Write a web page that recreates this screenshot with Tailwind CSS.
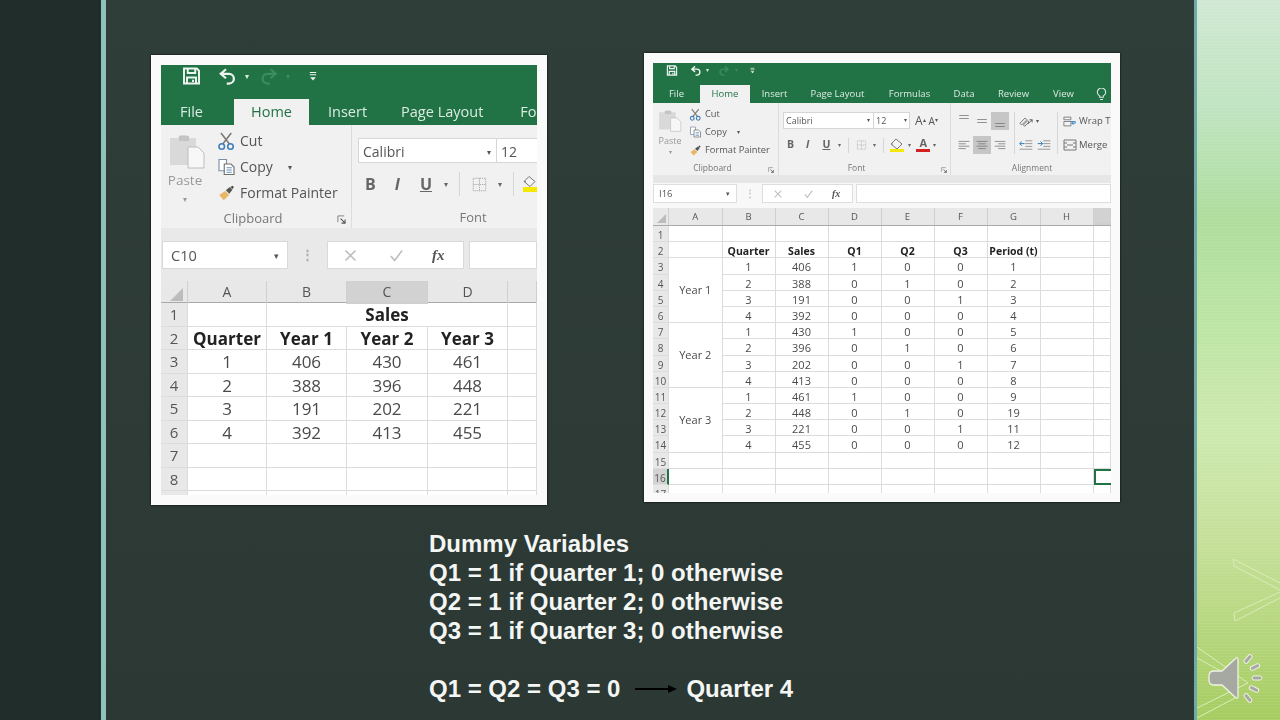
<!DOCTYPE html>
<html lang="en">
<head>
    <meta charset="UTF-8">
    <title>Dummy Variables</title>
    <script src="https://cdn.jsdelivr.net/npm/@tailwindcss/browser@4"></script>
</head>
<body class="w-[1280px] h-[720px] overflow-hidden bg-[#212d2a] font-['Open_Sans',sans-serif]">

    <!-- shared ribbon icons -->
    <svg class="hidden">
        <symbol id="save" viewBox="0 0 24 24"><path d="M2 2h17l3 3v17H2z M7 2v6h10V2 M6 22v-8h12v8 M14 17v3" fill="none" stroke="currentColor" stroke-width="2.600"/></symbol>
        <symbol id="undo" viewBox="0 0 24 24"><path d="M10 3 3 9l7 6 M3 9h11a6.500 6.500 0 0 1 0 13h-3" fill="none" stroke="currentColor" stroke-width="3"/></symbol>
        <symbol id="redo" viewBox="0 0 24 24"><path d="M14 3l7 6-7 6 M21 9H10a6.500 6.500 0 0 0 0 13h3" fill="none" stroke="currentColor" stroke-width="3"/></symbol>
        <symbol id="qat" viewBox="0 0 10 12"><path d="M1 1.500h8M1 4.500h8" stroke="currentColor" stroke-width="1.300"/><path d="M1.500 7.500h7L5 11.500z" fill="currentColor"/></symbol>
        <symbol id="paste" viewBox="0 0 36 36"><path d="M1 5h8l2-3h7l2 3h7v27H1z" fill="#d9d9d9"/><path d="M10 3h10v5H10z" fill="#c4c4c4"/><path d="M19 14h10l6 6v15H19z" fill="#f7f7f7" stroke="#bdbdbd"/></symbol>
        <symbol id="cut" viewBox="0 0 24 24"><path d="M5 2l11 14M18 2 7 16" fill="none" stroke="#7a7a7a" stroke-width="2"/><circle cx="6" cy="19" r="3.500" fill="none" stroke="#3f7fb8" stroke-width="2"/><circle cx="17" cy="19" r="3.500" fill="none" stroke="#3f7fb8" stroke-width="2"/></symbol>
        <symbol id="copy" viewBox="0 0 24 24"><path d="M2 2h10v15H2z" fill="#fff" stroke="#7d8fa3" stroke-width="1.500"/><path d="M9 8h9l4 4v10H9z" fill="#fff" stroke="#6f6f6f" stroke-width="1.500"/><path d="M12 13h7M12 16h7M12 19h7" stroke="#5a8fc0" stroke-width="1.300"/></symbol>
        <symbol id="painter" viewBox="0 0 24 24"><path d="M1 15l9-6 6 6-8 8z" fill="#e8b765"/><path d="M11 8l6-5 4 4-5 6z" fill="#555"/><path d="M18 3l3-2 2 2-2 3z" fill="#444"/></symbol>
        <symbol id="border" viewBox="0 0 24 24"><path d="M2 2h20v20H2z M12 2v20 M2 12h20" fill="none" stroke="#a5a5a5" stroke-width="1.500" stroke-dasharray="2 1.500"/></symbol>
        <symbol id="launch" viewBox="0 0 10 10"><path d="M1 8V1h7" fill="none" stroke="#777" stroke-width="1"/><path d="M4 4l5 5M9 5v4H5" fill="none" stroke="#555" stroke-width="1.200"/></symbol>
        <symbol id="cross" viewBox="0 0 24 24"><path d="M4 4l16 16M20 4 4 20" stroke="#bdbdbd" stroke-width="2.500"/></symbol>
        <symbol id="check" viewBox="0 0 24 24"><path d="M3 13l6 7L21 4" fill="none" stroke="#bdbdbd" stroke-width="2.500"/></symbol>
        <symbol id="lines-l" viewBox="0 0 20 16"><path d="M1 2h18M1 6h12M1 10h18M1 14h12" stroke="#777" stroke-width="1.300"/></symbol>
        <symbol id="lines-c" viewBox="0 0 20 16"><path d="M1 2h18M4 6h12M1 10h18M4 14h12" stroke="#777" stroke-width="1.300"/></symbol>
        <symbol id="lines-r" viewBox="0 0 20 16"><path d="M1 2h18M7 6h12M1 10h18M7 14h12" stroke="#777" stroke-width="1.300"/></symbol>
        <symbol id="lines-m" viewBox="0 0 20 8"><path d="M2 1.500h16M2 6.500h16" stroke="#777" stroke-width="1.300"/></symbol>
        <symbol id="outdent" viewBox="0 0 20 14"><path d="M9 1h10M9 5h10M9 9h10M1 13h18" stroke="#888" stroke-width="1.200"/><path d="M8 5H1M4 2 1 5l3 3" fill="none" stroke="#2f7fc0" stroke-width="1.400"/></symbol>
        <symbol id="indent" viewBox="0 0 20 14"><path d="M9 1h10M9 5h10M9 9h10M1 13h18" stroke="#888" stroke-width="1.200"/><path d="M1 5h7M5 2l3 3-3 3" fill="none" stroke="#2f7fc0" stroke-width="1.400"/></symbol>
        <symbol id="orient" viewBox="0 0 16 12"><path d="M1 8l6-6 2 2-6 6zM5 10l5-5 1.500 1.500-5 5z" fill="none" stroke="#666" stroke-width="1"/><path d="M10 9l5-5M15 4h-3M15 4v3" fill="none" stroke="#555" stroke-width="1"/></symbol>
        <symbol id="wrap" viewBox="0 0 16 12"><path d="M1 1h8v3H1zM1 6h8v5H1z" fill="#f4f4f4" stroke="#777" stroke-width="1"/><path d="M9 6h5v2h-4M12 6.500l-2 1.500 2 1.500" fill="none" stroke="#2f7fc0" stroke-width="1"/></symbol>
        <symbol id="merge" viewBox="0 0 14 12"><path d="M1 1h12v10H1zM1 4h3M10 4h3M1 8h3M10 8h3M4 6h6" fill="none" stroke="#777" stroke-width="1"/></symbol>
        <symbol id="bucket" viewBox="0 0 14 10"><path d="M6 0l6 5-5 5-6-5z" fill="#f4f4f4" stroke="#777" stroke-width="1"/><path d="M1 5h2" stroke="#888"/></symbol>
    </svg>

    <div class="flex h-full">
        <div class="w-[101px] shrink-0"></div>
        <div class="w-[5px] shrink-0 bg-[#8ec3bc]"></div>

        <!-- slide body -->
        <main class="w-[1088px] shrink-0 bg-gradient-to-b from-[#303e3a] to-[#2b3834] pt-[53px]">
            <div class="flex items-start">

                <!-- left screenshot -->
                <section class="ml-[45px] mt-[2px] w-[396px] h-[450px] bg-[#fafafa] p-[10px] shadow-[0_0_2px_#000]">
                    <div class="w-[376px] h-[430px] overflow-hidden blur-[0.5px] bg-white text-[#555]">
                        <div class="h-[60px] bg-[#217346] text-[#dcebe2]">
                            <div class="h-[34px] flex items-center pl-[21px] pb-[12px]">
                                <svg class="w-[19px] h-[18px] text-[#eef5f0]"><use href="#save"/></svg>
                                <svg class="w-[19px] h-[18px] ml-[17px] text-[#eef5f0]"><use href="#undo"/></svg>
                                <span class="ml-[8px] text-[8px]">▾</span>
                                <svg class="w-[18px] h-[18px] ml-[11px] text-[#3f8a60]"><use href="#redo"/></svg>
                                <span class="ml-[8px] text-[8px] text-[#3f8a60]">▾</span>
                                <svg class="ml-[19px] w-[8px] h-[10px] text-[#eef5f0]"><use href="#qat"/></svg>
                            </div>
                            <div class="h-[26px] flex whitespace-nowrap text-[14.500px] leading-[26px] *:shrink-0">
                                <div class="w-[73px] pl-[19px]">File</div>
                                <div class="w-[75px] text-center bg-[#f1f1f1] text-[#217346]">Home</div>
                                <div class="ml-[19px]">Insert</div>
                                <div class="ml-[34px]">Page Layout</div>
                                <div class="ml-[37px]">Fo</div>
                            </div>
                        </div>

                        <div class="h-[103px] flex bg-[#f1f1f1]">
                            <div class="relative w-[191px] shrink-0 flex flex-col border-r border-[#dcdcdc]">
                                <div class="h-[84px] flex">
                                    <div class="w-[50px] pl-[8px] pt-[8px] text-center text-[13.500px] text-[#999] leading-[16px]">
                                        <svg class="w-[36px] h-[36px]"><use href="#paste"/></svg>
                                        <div class="-ml-[5px] mt-[3px] w-[42px]">Paste</div>
                                        <div class="-ml-[5px] mt-[3px] w-[42px] text-[8px]">▾</div>
                                    </div>
                                    <div class="ml-[6px] pt-[3px] text-[14px] leading-[26px]">
                                        <div class="flex items-center gap-[4px]"><svg class="w-[19px] h-[20px]"><use href="#cut"/></svg>Cut</div>
                                        <div class="flex items-center gap-[4px]"><svg class="w-[19px] h-[18px]"><use href="#copy"/></svg>Copy<span class="ml-[11px] text-[8px]">▾</span></div>
                                        <div class="flex items-center gap-[4px]"><svg class="w-[19px] h-[16px]"><use href="#painter"/></svg>Format Painter</div>
                                    </div>
                                </div>
                                <div class="text-center text-[13px] leading-[18px] text-[#777] pr-[6px]">Clipboard</div>
                                <svg class="absolute right-[5px] bottom-[4px] w-[9px] h-[9px]"><use href="#launch"/></svg>
                            </div>
                            <div class="w-[242px] shrink-0 flex flex-col pl-[6px] pt-[13px]">
                                <div class="h-[25px] flex text-[14px] leading-[25px]">
                                    <div class="w-[139px] flex justify-between px-[4px] bg-white border border-[#d6d6d6]">Calibri<span class="text-[8px] pr-[1px]">▾</span></div>
                                    <div class="w-[60px] pl-[4px] bg-white border border-[#d6d6d6] border-l-0">12</div>
                                </div>
                                <div class="h-[26px] mt-[8px] flex items-center text-[16px] text-[#666]">
                                    <span class="ml-[7px] font-bold">B</span>
                                    <span class="ml-[19px] italic font-bold">I</span>
                                    <span class="ml-[20px] font-bold underline">U</span>
                                    <span class="ml-[12px] text-[8px]">▾</span>
                                    <div class="ml-[11px] w-px h-[24px] bg-[#d6d6d6]"></div>
                                    <svg class="ml-[11px] w-[17px] h-[15px]"><use href="#border"/></svg>
                                    <span class="ml-[10px] text-[8px]">▾</span>
                                    <div class="ml-[11px] w-px h-[24px] bg-[#d6d6d6]"></div>
                                    <div class="ml-[9px] w-[14px] shrink-0 border-b-[5px] border-[#f4e900]"><svg class="block w-[14px] h-[11px]"><use href="#bucket"/></svg></div>
                                </div>
                                <div class="mt-[11px] text-center text-[13px] leading-[18px] text-[#777] pr-[6px]">Font</div>
                            </div>
                        </div>

                        <div class="h-[53px] bg-[#e9e9e9] pt-[13px] pl-[1px] flex">
                            <div class="w-[126px] h-[28px] flex justify-between px-[8px] bg-white border border-[#d9d9d9] text-[14.500px] leading-[27px]">C10<span class="text-[9px]">▾</span></div>
                            <div class="w-[39px] text-center text-[#aaa] text-[13px] leading-[26px] font-bold">⋮</div>
                            <div class="w-[137px] h-[28px] flex items-center bg-white border border-[#d9d9d9] pl-[15px]">
                                <svg class="w-[15px] h-[15px]"><use href="#cross"/></svg>
                                <svg class="ml-[30px] w-[17px] h-[15px]"><use href="#check"/></svg>
                                <span class="ml-[27px] font-['Liberation_Serif',serif] italic font-bold text-[15px]">fx</span>
                            </div>
                            <div class="ml-[5px] flex-1 h-[28px] bg-white border border-[#d9d9d9]"></div>
                        </div>

                        <div class="grid grid-cols-[27px_79px_80px_81px_80px_29px] h-[22px] bg-[#e8e8e8] text-[14px] leading-[21px] text-center border-b border-[#a9a9a9] *:border-r *:border-[#cfcfcf]">
                            <div class="relative"><div class="absolute right-[4px] bottom-[3px] w-0 h-0 border-l-[13px] border-b-[13px] border-l-transparent border-b-[#bcbcbc]"></div></div>
                            <div>A</div><div>B</div>
                            <div class="bg-[#d2d2d2] border-b-2 border-b-[#217346]">C</div>
                            <div>D</div><div class="border-r-0"></div>
                        </div>
                        <div class="grid grid-cols-[27px_79px_80px_81px_80px_29px] auto-rows-[23.500px] text-[17px] leading-[23px] text-center text-[#4a4a4a] *:border-b *:border-r *:border-[#dcdcdc]">
                            <div class="bg-[#e8e8e8] text-[15px] text-[#555]">1</div><div></div><div class="col-span-3 font-bold text-[#222]">Sales</div><div></div>
                            <div class="bg-[#e8e8e8] text-[15px] text-[#555]">2</div><div class="font-bold text-[#222]">Quarter</div><div class="font-bold text-[#222]">Year 1</div><div class="font-bold text-[#222]">Year 2</div><div class="font-bold text-[#222]">Year 3</div><div></div>
                            <div class="bg-[#e8e8e8] text-[15px] text-[#555]">3</div><div>1</div><div>406</div><div>430</div><div>461</div><div></div>
                            <div class="bg-[#e8e8e8] text-[15px] text-[#555]">4</div><div>2</div><div>388</div><div>396</div><div>448</div><div></div>
                            <div class="bg-[#e8e8e8] text-[15px] text-[#555]">5</div><div>3</div><div>191</div><div>202</div><div>221</div><div></div>
                            <div class="bg-[#e8e8e8] text-[15px] text-[#555]">6</div><div>4</div><div>392</div><div>413</div><div>455</div><div></div>
                            <div class="bg-[#e8e8e8] text-[15px] text-[#555]">7</div><div></div><div></div><div></div><div></div><div></div>
                            <div class="bg-[#e8e8e8] text-[15px] text-[#555]">8</div><div></div><div></div><div></div><div></div><div></div>
                            <div class="bg-[#e8e8e8]"></div><div></div><div></div><div></div><div></div><div></div>
                        </div>
                    </div>
                </section>

                <!-- right screenshot -->
                <section class="ml-[97px] w-[476px] h-[449px] bg-[#fafafa] pl-[9px] pt-[10px] shadow-[0_0_2px_#000]">
                    <div class="w-[458px] h-[430px] overflow-hidden blur-[0.5px] bg-white text-[#555]">
                        <div class="h-[40px] bg-[#217346] text-[#dcebe2]">
                            <div class="h-[22px] flex items-center pl-[13px] pb-[7px]">
                                <svg class="w-[12px] h-[11px] text-[#eef5f0]"><use href="#save"/></svg>
                                <svg class="w-[12px] h-[11px] ml-[12px] text-[#eef5f0]"><use href="#undo"/></svg>
                                <span class="ml-[4px] text-[6px]">▾</span>
                                <svg class="w-[12px] h-[11px] ml-[9px] text-[#3f8a60]"><use href="#redo"/></svg>
                                <span class="ml-[5px] text-[6px] text-[#3f8a60]">▾</span>
                                <svg class="ml-[12px] w-[5px] h-[7px] text-[#eef5f0]"><use href="#qat"/></svg>
                            </div>
                            <div class="h-[18px] flex whitespace-nowrap text-[9.500px] leading-[18px] text-center *:shrink-0">
                                <div class="w-[47px]">File</div>
                                <div class="w-[50px] bg-[#f1f1f1] text-[#217346]">Home</div>
                                <div class="w-[49px]">Insert</div>
                                <div class="w-[77px]">Page Layout</div>
                                <div class="w-[67px]">Formulas</div>
                                <div class="w-[42px]">Data</div>
                                <div class="w-[57px]">Review</div>
                                <div class="w-[43px]">View</div>
                                <svg class="ml-[11px] mt-[3px] w-[11px] h-[13px]" viewBox="0 0 12 14"><path d="M4 10V8.500A4.500 4.500 0 1 1 8 8.500V10zM4.500 12.500h3" fill="none" stroke="#e6f0ea" stroke-width="1.100"/></svg>
                            </div>
                        </div>

                        <div class="h-[72px] flex bg-[#f1f1f1]">
                            <div class="relative w-[126px] shrink-0 flex flex-col border-r border-[#dcdcdc]">
                                <div class="h-[59px] flex">
                                    <div class="w-[33px] pl-[5px] pt-[6px] text-center text-[9px] text-[#999] leading-[10px]">
                                        <svg class="w-[24px] h-[23px]"><use href="#paste"/></svg>
                                        <div class="-ml-[2px] mt-[4px] w-[28px]">Paste</div>
                                        <div class="-ml-[2px] mt-[1px] w-[28px] text-[6px]">▾</div>
                                    </div>
                                    <div class="ml-[3px] pt-[2px] text-[9.300px] leading-[18px]">
                                        <div class="flex items-center gap-[3px]"><svg class="w-[13px] h-[13px]"><use href="#cut"/></svg>Cut</div>
                                        <div class="flex items-center gap-[3px]"><svg class="w-[13px] h-[12px]"><use href="#copy"/></svg>Copy<span class="ml-[7px] text-[6px]">▾</span></div>
                                        <div class="flex items-center gap-[3px]"><svg class="w-[13px] h-[11px]"><use href="#painter"/></svg>Format Painter</div>
                                    </div>
                                </div>
                                <div class="text-center text-[8.500px] leading-[12px] text-[#777] pr-[6px]">Clipboard</div>
                                <svg class="absolute right-[4px] bottom-[2px] w-[6px] h-[6px]"><use href="#launch"/></svg>
                            </div>
                            <div class="relative w-[172px] shrink-0 flex flex-col pl-[4px] pt-[9px] border-r border-[#dcdcdc]">
                                <div class="flex items-center">
                                    <div class="w-[91px] h-[17px] flex justify-between px-[2px] bg-white border border-[#d6d6d6] text-[9px] leading-[15px]">Calibri<span class="text-[6px] pr-px">▾</span></div>
                                    <div class="w-[36px] h-[17px] flex justify-between px-[2px] bg-white border border-[#d6d6d6] border-l-0 text-[9px] leading-[15px]">12<span class="text-[6px]">▾</span></div>
                                    <span class="ml-[5px] text-[12px] leading-none">A<sup class="text-[6px]">▴</sup></span>
                                    <span class="ml-[3px] text-[10px] leading-none">A<sup class="text-[6px]">▾</sup></span>
                                </div>
                                <div class="h-[18px] mt-[7px] flex items-center text-[10.500px] text-[#666]">
                                    <span class="ml-[4px] font-bold">B</span>
                                    <span class="ml-[12px] italic font-bold">I</span>
                                    <span class="ml-[13px] font-bold underline">U</span>
                                    <span class="ml-[8px] text-[6px]">▾</span>
                                    <div class="ml-[7px] w-px h-[15px] bg-[#d6d6d6]"></div>
                                    <svg class="ml-[7px] w-[11px] h-[10px]"><use href="#border"/></svg>
                                    <span class="ml-[6px] text-[6px]">▾</span>
                                    <div class="ml-[7px] w-px h-[15px] bg-[#d6d6d6]"></div>
                                    <div class="ml-[6px] w-[14px] shrink-0 border-b-[3px] border-[#f4e900]"><svg class="block w-[14px] h-[10px]"><use href="#bucket"/></svg></div>
                                    <span class="ml-[4px] text-[6px]">▾</span>
                                    <div class="ml-[5px] w-[14px] h-[14px] border-b-[3px] border-[#d32020] text-[11px] leading-[10px] text-center font-bold">A</div>
                                    <span class="ml-[3px] text-[6px]">▾</span>
                                </div>
                                <div class="mt-[8px] text-center text-[8.500px] leading-[12px] text-[#777] pr-[20px]">Font</div>
                                <svg class="absolute right-[3px] bottom-[2px] w-[6px] h-[6px]"><use href="#launch"/></svg>
                            </div>
                            <div class="flex-1 flex flex-col">
                                <div class="h-[59px] flex pl-[4px] pt-[9px]">
                                    <div class="grid grid-cols-[repeat(3,18px)] grid-rows-[18px_18px] gap-y-[6px] *:flex *:justify-center">
                                        <div class="items-start pt-[2px]"><svg class="w-[12px] h-[6px]"><use href="#lines-m"/></svg></div>
                                        <div class="items-center"><svg class="w-[12px] h-[6px]"><use href="#lines-m"/></svg></div>
                                        <div class="items-end pb-[2px] bg-[#c6c6c6]"><svg class="w-[12px] h-[6px]"><use href="#lines-m"/></svg></div>
                                        <div class="items-center"><svg class="w-[12px] h-[10px]"><use href="#lines-l"/></svg></div>
                                        <div class="items-center bg-[#c6c6c6]"><svg class="w-[12px] h-[10px]"><use href="#lines-c"/></svg></div>
                                        <div class="items-center"><svg class="w-[12px] h-[10px]"><use href="#lines-r"/></svg></div>
                                    </div>
                                    <div class="ml-[5px] w-px h-[42px] bg-[#d6d6d6]"></div>
                                    <div class="ml-[4px] w-[38px] flex flex-col">
                                        <div class="h-[18px] flex items-center"><svg class="w-[14px] h-[11px]"><use href="#orient"/></svg><span class="ml-[3px] text-[6px]">▾</span></div>
                                        <div class="mt-[6px] h-[18px] flex items-center gap-[4px]"><svg class="w-[14px] h-[10px]"><use href="#outdent"/></svg><svg class="w-[14px] h-[10px]"><use href="#indent"/></svg></div>
                                    </div>
                                    <div class="w-px h-[42px] bg-[#d6d6d6]"></div>
                                    <div class="ml-[5px] text-[9.500px] leading-[18px] whitespace-nowrap">
                                        <div class="flex items-center gap-[2px]"><svg class="w-[14px] h-[11px]"><use href="#wrap"/></svg>Wrap T</div>
                                        <div class="mt-[6px] flex items-center gap-[2px]"><svg class="w-[14px] h-[12px]"><use href="#merge"/></svg>Merge</div>
                                    </div>
                                </div>
                                <div class="text-center text-[8.500px] leading-[12px] text-[#777] pl-[2px]">Alignment</div>
                            </div>
                        </div>

                        <div class="h-[8px] bg-[#e6e6e6]"></div>
                        <div class="h-[25px] flex bg-[#f8f8f8] pt-[1px]">
                            <div class="w-[84px] h-[19px] flex justify-between pl-[5px] pr-[6px] bg-white border border-[#dedede] text-[9.500px] leading-[18px]">I16<span class="text-[7px]">▾</span></div>
                            <div class="w-[25px] text-center text-[#bbb] text-[10px] leading-[18px] font-bold">⋮</div>
                            <div class="w-[91px] h-[19px] flex items-center bg-white border border-[#dedede] pl-[10px]">
                                <svg class="w-[10px] h-[10px]"><use href="#cross"/></svg>
                                <svg class="ml-[20px] w-[11px] h-[10px]"><use href="#check"/></svg>
                                <span class="ml-[18px] font-['Liberation_Serif',serif] italic font-bold text-[10px]">fx</span>
                            </div>
                            <div class="ml-[3px] flex-1 h-[19px] bg-white border border-[#dedede]"></div>
                        </div>

                        <div class="grid grid-cols-[16px_53.500px_53px_53px_53px_53px_53px_53px_53px_17.500px] h-[18px] bg-[#e8e8e8] text-[9.500px] leading-[17px] text-center border-b border-[#a9a9a9] *:border-r *:border-[#cfcfcf]">
                            <div class="relative"><div class="absolute right-[2px] bottom-[2px] w-0 h-0 border-l-[9px] border-b-[9px] border-l-transparent border-b-[#bcbcbc]"></div></div>
                            <div>A</div><div>B</div><div>C</div><div>D</div><div>E</div><div>F</div><div>G</div><div>H</div>
                            <div class="bg-[#d2d2d2] border-b-2 border-b-[#217346]"></div>
                        </div>
                        <div id="sheet" class="grid grid-cols-[16px_53.500px_53px_53px_53px_53px_53px_53px_53px_17.500px] auto-rows-[16.200px] text-[11px] leading-[18px] text-center text-[#4a4a4a] *:border-b *:border-r *:border-[#dcdcdc]"></div>
                    </div>
                </section>
            </div>

            <!-- notes under the screenshots -->
            <div class="ml-[323px] mt-[24px] font-['Liberation_Sans',sans-serif] font-bold text-[24px] leading-[29px] text-[#f4f6f4]">
                <p>Dummy Variables</p>
                <p>Q1 = 1 if Quarter 1; 0 otherwise</p>
                <p>Q2 = 1 if Quarter 2; 0 otherwise</p>
                <p>Q3 = 1 if Quarter 3; 0 otherwise</p>
                <p class="h-[29px]"></p>
                <div class="flex items-center">
                    <span>Q1 = Q2 = Q3 = 0</span>
                    <svg class="ml-[15px] w-[42px] h-[10px]" viewBox="0 0 42 10"><path d="M0 5h36" stroke="#000" stroke-width="2"/><path d="M33 1 42 5l-9 4z" fill="#000"/></svg>
                    <span class="ml-[9px]">Quarter 4</span>
                </div>
            </div>
        </main>

        <div class="w-[3px] shrink-0 bg-[#6fa9a8]"></div>

        <!-- green side panel -->
        <aside class="relative w-[83px] shrink-0 bg-[repeating-linear-gradient(0deg,rgba(255,255,255,0.07)_0,rgba(255,255,255,0.07)_1px,transparent_1px,transparent_3px),linear-gradient(180deg,#cfe8d3_0%,#c0e4c0_15%,#aedd9e_30%,#bde5a4_45%,#cde9ae_60%,#c6e09a_75%,#a6cc60_100%)]">
            <svg class="absolute inset-0 w-[83px] h-[720px]" viewBox="1197 0 83 720" fill="none" stroke="#d9edb8" stroke-width="1">
                <path d="M1233 559 1280 583M1233 559l1 7 46 24M1280 592l-46 21 1 8 45-23"/>
                <path d="M1197 647l51 36M1197 658l35 19M1197 708l51-25M1197 718l38-20"/>
            </svg>
            <svg class="absolute left-[11px] top-[654px] w-[56px] h-[50px]" viewBox="0 0 56 50">
                <path d="M1 22q0-5 5-5h8L27 5q3-3 3 1v36q0 4-3 1L14 31H6q-5 0-5-5z" fill="#a6a9a2" stroke="#eef3e2" stroke-width="1.300"/>
                <g fill="#a6a9a2" stroke="#eef3e2" stroke-width="1">
                    <rect x="-5" y="-2" width="10" height="4" rx="2" transform="translate(40 5) rotate(-50)"/>
                    <rect x="-5" y="-2" width="10" height="4" rx="2" transform="translate(47 13) rotate(-25)"/>
                    <rect x="-5" y="-2" width="10" height="4" rx="2" transform="translate(49 24)"/>
                    <rect x="-5" y="-2" width="10" height="4" rx="2" transform="translate(46 35) rotate(25)"/>
                    <rect x="-5" y="-2" width="10" height="4" rx="2" transform="translate(40 44) rotate(50)"/>
                </g>
            </svg>
        </aside>
    </div>

    <script>
        // right hand sheet: quarter, sales, q1, q2, q3, period
        const rows = [
            [1,406,1,0,0,1],[2,388,0,1,0,2],[3,191,0,0,1,3],[4,392,0,0,0,4],
            [1,430,1,0,0,5],[2,396,0,1,0,6],[3,202,0,0,1,7],[4,413,0,0,0,8],
            [1,461,1,0,0,9],[2,448,0,1,0,19],[3,221,0,0,1,11],[4,455,0,0,0,12]
        ];
        const heads = ['Quarter','Sales','Q1','Q2','Q3','Period (t)'];
        const sheet = document.getElementById('sheet');

        function cell(text, cls) {
            const el = document.createElement('div');
            el.textContent = text;
            if (cls) el.className = cls;
            sheet.appendChild(el);
        }
        const rowHead = 'bg-[#e8e8e8] text-[10px] text-[#555] overflow-hidden';

        for (let n = 1; n <= 18; n++) {
            const active = n === 16;
            cell(n <= 17 ? n : '', active ? 'bg-[#d2d2d2] text-[10px] text-[#555] !border-r-2 !border-r-[#217346]' : rowHead);
            if (n === 2) {
                cell('');
                heads.forEach(h => cell(h, 'font-bold text-[#222] text-[10.500px] whitespace-nowrap'));
                cell(''); cell('');
            } else if (n >= 3 && n <= 14) {
                if ((n - 3) % 4 === 0) cell('Year ' + ((n - 3) / 4 + 1), 'row-span-4 flex items-center justify-center');
                rows[n - 3].forEach(v => cell(v));
                cell(''); cell('');
            } else {
                for (let c = 0; c < 8; c++) cell('');
                cell('', active ? '!border-2 !border-r-0 !border-[#217346]' : '');
            }
        }
    </script>
</body>
</html>
